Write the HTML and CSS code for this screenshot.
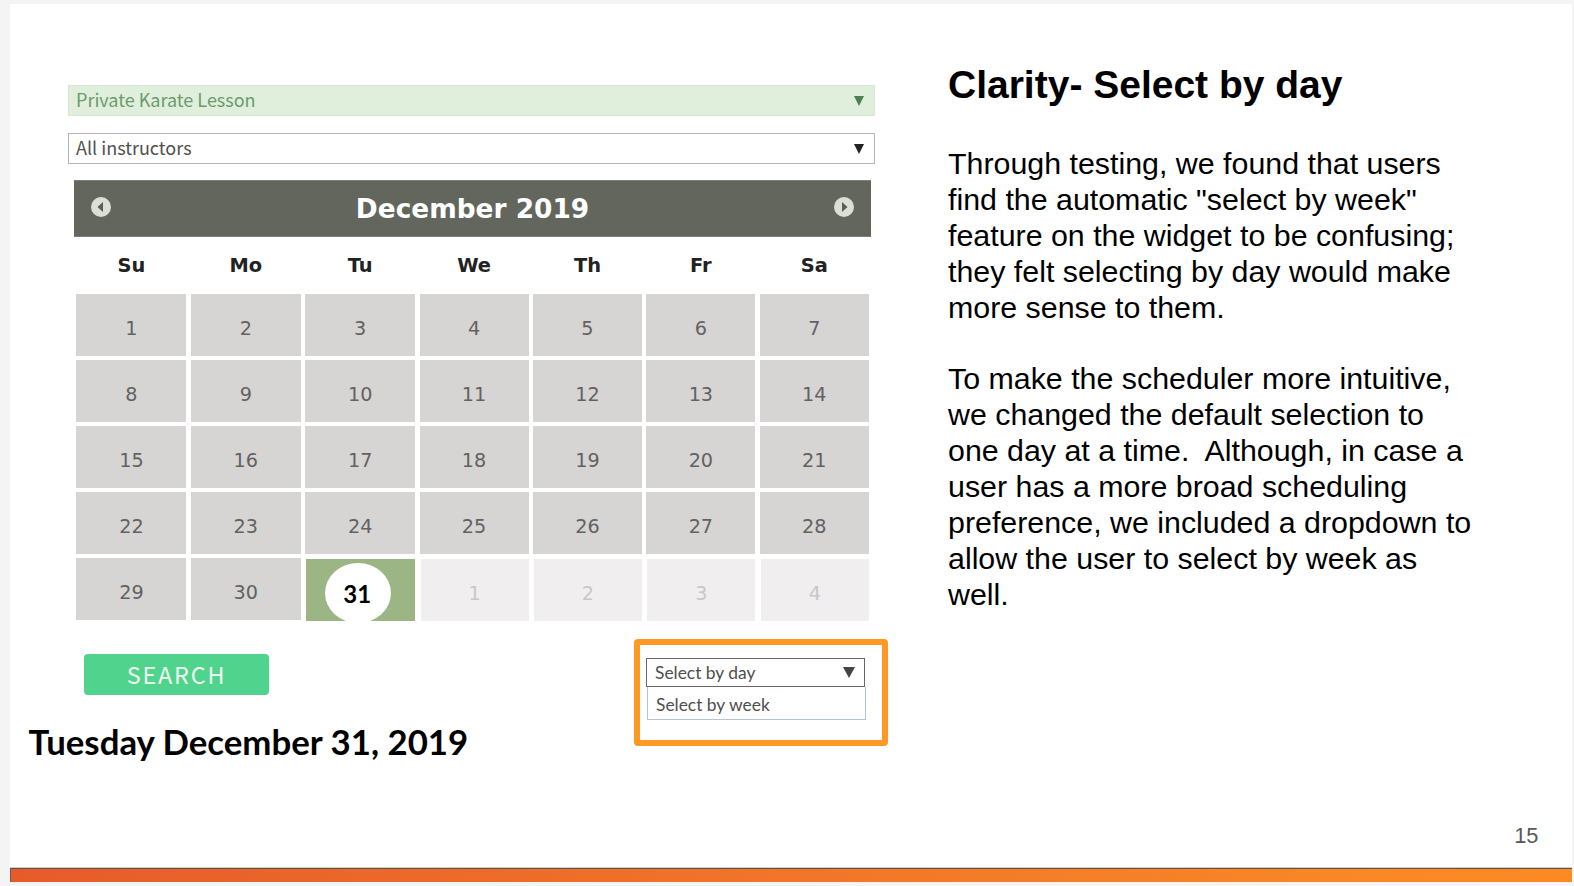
FILE: index.html
```html
<!DOCTYPE html>
<html lang="en">
<head>
<meta charset="utf-8">
<title>Clarity- Select by day</title>
<link rel="stylesheet" href="styles.css">
</head>
<body>
<main class="slide">
  <div class="content">
    <section class="scheduler">
      <div class="field field-green"><span>Private Karate Lesson</span><svg class="arrow" viewBox="0 0 10 10"><path d="M0 0H10L5 10Z"/></svg></div>
      <div class="field"><span>All instructors</span><svg class="arrow" viewBox="0 0 10 10"><path d="M0 0H10L5 10Z"/></svg></div>
      <div class="month">
        <svg class="nav" viewBox="0 0 20 20"><circle cx="10" cy="10" r="10"/><path d="M12 5V15L6.5 10Z"/></svg>
        <span>December 2019</span>
        <svg class="nav" viewBox="0 0 20 20"><circle cx="10" cy="10" r="10"/><path d="M8 5V15L13.5 10Z"/></svg>
      </div>
      <div class="weekdays"><span>Su</span><span>Mo</span><span>Tu</span><span>We</span><span>Th</span><span>Fr</span><span>Sa</span></div>
      <div class="days">
        <span>1</span><span>2</span><span>3</span><span>4</span><span>5</span><span>6</span><span>7</span>
        <span>8</span><span>9</span><span>10</span><span>11</span><span>12</span><span>13</span><span>14</span>
        <span>15</span><span>16</span><span>17</span><span>18</span><span>19</span><span>20</span><span>21</span>
        <span>22</span><span>23</span><span>24</span><span>25</span><span>26</span><span>27</span><span>28</span>
        <span>29</span><span>30</span><span class="selected"><b>31</b></span><span class="next">1</span><span class="next">2</span><span class="next">3</span><span class="next">4</span>
      </div>
      <div class="actions">
        <div class="search">SEARCH</div>
        <div class="highlight">
          <div class="option current"><span>Select by day</span><svg class="caret" viewBox="0 0 12 11"><path d="M0 0H12L6 11Z"/></svg></div>
          <div class="option other">Select by week</div>
        </div>
      </div>
      <div class="date">Tuesday December 31, 2019</div>
    </section>
    <section class="notes">
      <h1>Clarity- Select by day</h1>
      <p>Through testing, we found that users<br>find the automatic "select by week"<br>feature on the widget to be confusing;<br>they felt selecting by day would make<br>more sense to them.</p>
      <p>To make the scheduler more intuitive,<br>we changed the default selection to<br>one day at a time.&nbsp; Although, in case a<br>user has a more broad scheduling<br>preference, we included a dropdown to<br>allow the user to select by week as<br>well.</p>
      <div class="page-number">15</div>
    </section>
  </div>
  <footer class="stripe"></footer>
</main>
</body>
</html>
```
FILE: styles.css
```css
* { box-sizing: border-box; }
body {
  margin: 0;
  height: 886px;
  padding: 4px 2px 4px 10px;
  background: #f4f4f4;
  overflow: hidden;
}
.slide {
  display: flex;
  flex-direction: column;
  height: 878px;
  background: #fff;
}
.content { display: flex; height: 864px; }
.scheduler {
  width: 938px;
  padding-top: 81px;
  font-family: "DejaVu Sans", sans-serif;
}
.field {
  display: flex;
  align-items: center;
  justify-content: space-between;
  width: 807px;
  height: 31px;
  margin: 0 0 17px 58px;
  padding: 0 10px 0 7px;
  border: 1px solid #b5b5b7;
  font: 18px/27px "Noto Sans CJK JP", sans-serif;
  color: #505050;
}
.field span { padding-bottom: 2px; }
.field-green {
  background: #dfefdb;
  border-color: #d5e8d0;
  color: #6d9a6e;
}
.arrow { width: 10px; height: 10px; fill: #222; }
.field-green .arrow { fill: #4c8250; }
.month {
  display: flex;
  align-items: center;
  justify-content: space-between;
  width: 797px;
  height: 57px;
  margin: -1px 0 0 64px;
  padding: 0 17px 0 17px;
  background: #63665d;
  border-top: 1px solid #7c7f77;
  border-bottom: 1px solid #7c7f77;
  color: #fff;
  font-size: 26.4px;
  font-weight: bold;
}
.nav { width: 20px; height: 20px; margin-bottom: 4px; fill: #deded9; }
.nav path { fill: #5a5d54; }
.weekdays, .days {
  display: grid;
  grid-template-columns: repeat(3, 110px) repeat(4, 109px);
  column-gap: 4.4px;
  margin-left: 66.4px;
}
.weekdays {
  height: 57px;
  line-height: 58px;
  text-align: center;
  font-size: 19.4px;
  font-weight: bold;
  color: #222;
}
.days {
  grid-auto-rows: 61.7px;
  row-gap: 4.3px;
  font-size: 19.2px;
  color: #626262;
}
.days span {
  display: flex;
  align-items: center;
  justify-content: center;
  padding-top: 7px;
  background: #d6d5d3;
}
.days .next {
  margin: 1.5px 0 -1px 1px;
  background: #f0eeef;
  color: #c8c8c8;
}
.days .selected {
  align-items: flex-start;
  height: 61.7px;
  margin: 1.5px 0 0 1px;
  padding: 4px 5px 0 0;
  overflow: hidden;
  background: #9bb584;
}
.selected b {
  flex: none;
  width: 66px;
  height: 60px;
  padding-right: 2px;
  border-radius: 50%;
  background: #fff;
  color: #000;
  text-align: center;
  font: bold 24px/62px Lato, sans-serif;
}
.actions { display: flex; height: 108px; }
.search {
  width: 185px;
  height: 41px;
  margin: 34px 0 0 74px;
  border-radius: 4px;
  background: #50d38d;
  color: #effff2;
  text-align: center;
  font: 23.4px/40px "Noto Sans CJK JP", sans-serif;
  letter-spacing: 1.8px;
}
.highlight {
  width: 254px;
  height: 107px;
  margin: 19px 0 0 365px;
  padding: 13px 0 0 6px;
  border: 6px solid #ff9926;
  border-radius: 4px;
  font: 17.4px Lato, sans-serif;
  color: #4e4e4e;
}
.option {
  display: flex;
  align-items: center;
  justify-content: space-between;
  width: 219px;
}
.current {
  height: 29px;
  padding: 0 9px 0 8px;
  border: 1px solid #666;
}
.caret { width: 12px; height: 11px; fill: #444; }
.other {
  height: 33px;
  margin-left: 1px;
  padding: 3px 0 0 8px;
  border: 1px solid #b4c3dc;
  border-top: 0;
}
.date {
  margin: -7px 0 0 18.5px;
  color: #000;
  white-space: nowrap;
  font: bold 34.8px/42px Lato, sans-serif;
}
.notes {
  display: flex;
  flex-direction: column;
  flex: 1;
  padding-top: 58px;
  font-family: "Liberation Sans", Arial, sans-serif;
  color: #000;
}
h1 { margin: 0 0 38px; font-size: 39px; line-height: 46px; }
p { margin: 0 0 35.4px; font-size: 30.37px; line-height: 36px; white-space: nowrap; }
.page-number {
  margin: auto 33.5px 19px auto;
  color: #595959;
  font-size: 21.8px;
  line-height: 26px;
}
.stripe {
  height: 14px;
  border-top: 1px solid #5b5552;
  border-left: 1px solid #7b5a4e;
  box-shadow: 0 -1px #cfcfcf;
  background: linear-gradient(90deg, #e75b2b, #f98725 85%, #ff8a24);
}
```
